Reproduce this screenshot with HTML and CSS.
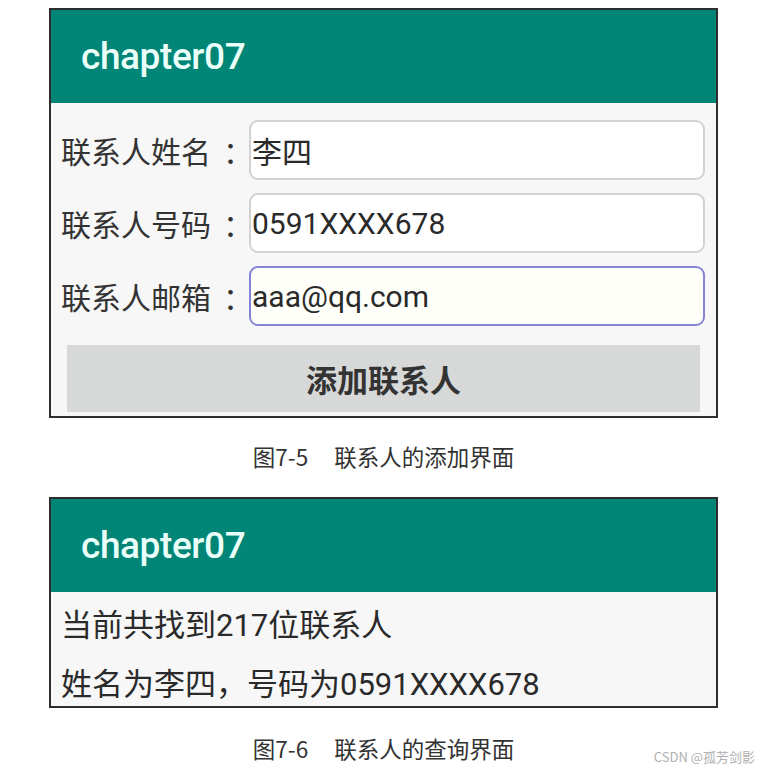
FILE: index.html
```html
<!DOCTYPE html>
<html lang="zh-CN">
<head>
  <meta charset="UTF-8">
  <meta name="viewport" content="width=device-width, initial-scale=1.0">
  <link rel="stylesheet" href="styles.css">
  <title>chapter07</title>
</head>
<body>
  <div class="page">
    <!-- Figure 7-5: add contact -->
    <div class="phone phone_add">
      <div class="app_bar">
        <p>chapter07</p>
      </div>
      <div class="app_body">
        <div class="form_row">
          <label class="form_label">联系人姓名<span class="colon">：</span></label>
          <div class="form_input">李四</div>
        </div>
        <div class="form_row">
          <label class="form_label">联系人号码<span class="colon">：</span></label>
          <div class="form_input">0591XXXX678</div>
        </div>
        <div class="form_row">
          <label class="form_label">联系人邮箱<span class="colon">：</span></label>
          <div class="form_input focused">aaa@qq.com</div>
        </div>
        <button class="add_button">添加联系人</button>
      </div>
    </div>
    <p class="caption caption_add">图7-5<span class="caption_gap"></span>联系人的添加界面</p>

    <!-- Figure 7-6: query contacts -->
    <div class="phone phone_query">
      <div class="app_bar">
        <p>chapter07</p>
      </div>
      <div class="app_body query_body">
        <p class="query_line">当前共找到217位联系人</p>
        <p class="query_line">姓名为李四，号码为0591XXXX678</p>
      </div>
    </div>
    <p class="caption caption_query">图7-6<span class="caption_gap"></span>联系人的查询界面</p>

    <p class="watermark">CSDN @孤芳剑影</p>
  </div>
</body>
</html>
```

FILE: styles.css
```css
/* Basics */
body {
  margin: 0;
  background-color: #ffffff;
  font-family: Roboto, "Noto Sans CJK SC", sans-serif;
  color: #333333;
}

p {
  margin: 0;
}

.page {
  position: relative;
  width: 761px;
  height: 771px;
  padding-top: 8px;
  box-sizing: border-box;
}

/* Phone frames */
.phone {
  width: 669px;
  margin-left: 49px;
  border: 2px solid #2e2e2e;
  box-sizing: border-box;
  background-color: #f7f7f7;
}

.app_bar {
  display: flex;
  align-items: center;
  height: 93px;
  padding-left: 30px;
  background-color: #008577;
}

.app_bar p {
  font-family: Roboto, sans-serif;
  font-size: 37px;
  font-weight: 500;
  color: #eafff9;
  letter-spacing: -0.4px;
}

.app_body {
  display: flex;
  flex-direction: column;
  padding: 17px 11px 4px 10px;
  gap: 13px;
}

/* Add form */
.form_row {
  display: flex;
  align-items: center;
}

.form_label {
  width: 188px;
  font-family: "Noto Sans CJK SC", sans-serif;
  font-size: 30px;
  color: #333333;
  white-space: nowrap;
}

.colon {
  margin-left: 12px;
}

.form_input {
  flex: 1;
  display: flex;
  align-items: center;
  height: 60px;
  padding-left: 1px;
  box-sizing: border-box;
  border: 2px solid #d2d2d2;
  border-radius: 9px;
  background-color: #ffffff;
  font-family: Roboto, "Noto Sans CJK SC", sans-serif;
  font-size: 30px;
  color: #2a2a2a;
}

.form_input.focused {
  border-color: #8583d6;
  background-color: #fffff9;
}

.add_button {
  height: 67px;
  margin: 6px 5px 0 6px;
  border: none;
  background-color: #d7d8d8;
  font-family: "Noto Sans CJK SC", sans-serif;
  font-size: 31px;
  font-weight: bold;
  color: #333333;
}

/* Query list */
.query_body {
  padding: 15px 10px 2px 10px;
  gap: 21px;
}

.query_line {
  font-family: Roboto, "Noto Sans CJK SC", sans-serif;
  font-size: 31px;
  line-height: 38px;
  color: #2a2a2a;
}

/* Captions */
.caption {
  width: 669px;
  margin-left: 49px;
  text-align: center;
  font-family: "Noto Sans CJK SC", sans-serif;
  font-size: 22.5px;
  color: #333333;
}

.caption_gap {
  display: inline-block;
  width: 26px;
}

.caption_add {
  margin-top: 22px;
  margin-bottom: 25px;
}

.caption_query {
  margin-top: 24px;
}

.watermark {
  position: absolute;
  right: 6px;
  bottom: 5px;
  font-family: "Noto Sans CJK SC", sans-serif;
  font-size: 13px;
  color: #b0b0b0;
}
```
